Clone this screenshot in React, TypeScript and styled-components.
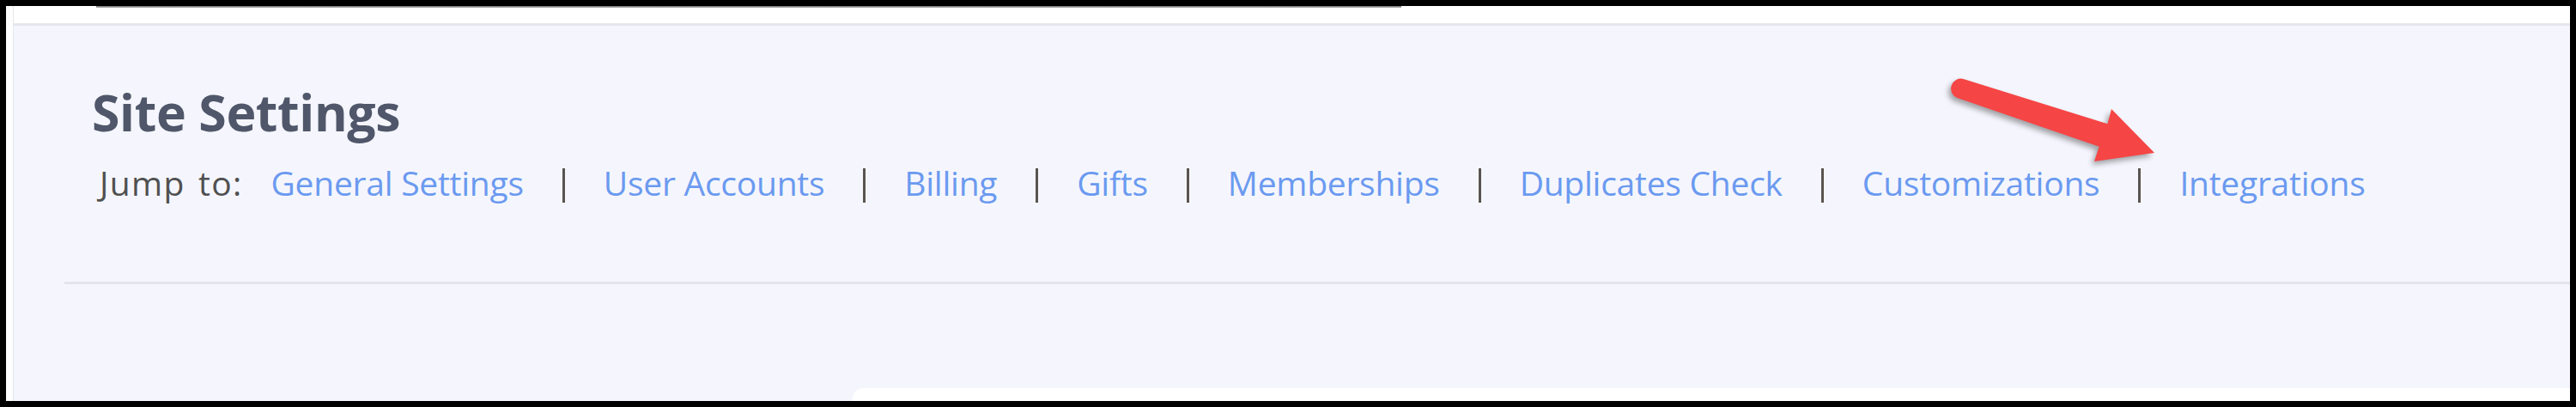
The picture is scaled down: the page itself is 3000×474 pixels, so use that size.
import styled, { createGlobalStyle } from 'styled-components';

const GlobalStyle = createGlobalStyle`
  html, body {
    margin: 0;
    padding: 0;
    background: #000;
  }
  body {
    font-family: "Open Sans", "Noto Sans", Arial, sans-serif;
  }
`;

const Frame = styled.div`
  position: relative;
  width: 3000px;
  height: 474px;
  box-sizing: border-box;
  padding: 7px;
  background: #000;
`;

const Screen = styled.div`
  display: flex;
  width: 100%;
  height: 100%;
  overflow: hidden;
  background: #f5f6fd;
`;

const SideStrip = styled.div`
  flex: 0 0 8px;
  background: linear-gradient(to right, #fafafa, #ffffff);
  border-right: 1px solid #e6e7ec;
`;

const Main = styled.div`
  flex: 1;
  display: flex;
  flex-direction: column;
  min-width: 0;
`;

const TopBar = styled.div`
  height: 20px;
  background: #fff;
  border-bottom: 3px solid #e6e7ec;
  box-sizing: content-box;
`;

const MenuEdge = styled.div`
  width: 1520px;
  height: 2px;
  margin-left: 96px;
  background: linear-gradient(to bottom, #6f6f6f, #b8b8b8);
`;

const Header = styled.div`
  padding: 66px 0 0 91px;
`;

const Title = styled.h1`
  margin: 0;
  font-size: 59px;
  line-height: 68px;
  font-weight: 700;
  color: #50576a;
  letter-spacing: -0.4px;
`;

const JumpBar = styled.nav`
  display: flex;
  align-items: center;
  margin: 24px 0 0 9px;
  height: 48px;
  font-size: 39px;
  letter-spacing: -0.25px;
`;

const JumpLabel = styled.span`
  color: #505050;
  margin-right: 33px;
  letter-spacing: 1.3px;
  word-spacing: 4px;
`;

const JumpLink = styled.a`
  color: #6b9af0;
  text-decoration: none;
  white-space: nowrap;
`;

const Pipe = styled.span`
  flex: 0 0 3px;
  height: 40px;
  margin: 7px 45px 0;
  background: #5a5450;
`;

const Rule = styled.div`
  height: 3px;
  margin: 92px 0 0 59px;
  background: #e3e5ed;
`;

const LowerRow = styled.div`
  display: flex;
  margin-top: 121px;
  flex: 1;
`;

const LeftColumn = styled.div`
  flex: 0 0 977px;
`;

const Card = styled.div`
  flex: 1;
  background: #fff;
  border-top-left-radius: 12px;
`;

const Arrow = styled.svg`
  position: absolute;
  left: 0;
  top: 0;
  width: 3000px;
  height: 474px;
  pointer-events: none;
  filter: drop-shadow(-3px 4px 3px rgba(0, 0, 0, 0.35));
`;

const links = [
  'General Settings',
  'User Accounts',
  'Billing',
  'Gifts',
  'Memberships',
  'Duplicates Check',
  'Customizations',
  'Integrations',
];

export default function App() {
  return (
    <>
      <GlobalStyle />
      <Frame>
        <Screen>
          <SideStrip />
          <Main>
            <TopBar>
              <MenuEdge />
            </TopBar>
            <Header>
              <Title>Site Settings</Title>
              <JumpBar>
                <JumpLabel>Jump to:</JumpLabel>
                {links.map((label, i) => (
                  <>
                    {i > 0 && <Pipe key={`p-${label}`} />}
                    <JumpLink key={label} href="#">
                      {label}
                    </JumpLink>
                  </>
                ))}
              </JumpBar>
            </Header>
            <Rule />
            <LowerRow>
              <LeftColumn />
              <Card />
            </LowerRow>
          </Main>
        </Screen>
        <Arrow viewBox="0 0 3000 474">
          <path
            d="M 2286.6 92 L 2454.4 144.2 L 2459 127 L 2509 178 L 2439 188 L 2444.6 170.8 L 2279.4 114 A 11.6 11.6 0 0 1 2286.6 92 Z"
            fill="#f54545"
          />
        </Arrow>
      </Frame>
    </>
  );
}
